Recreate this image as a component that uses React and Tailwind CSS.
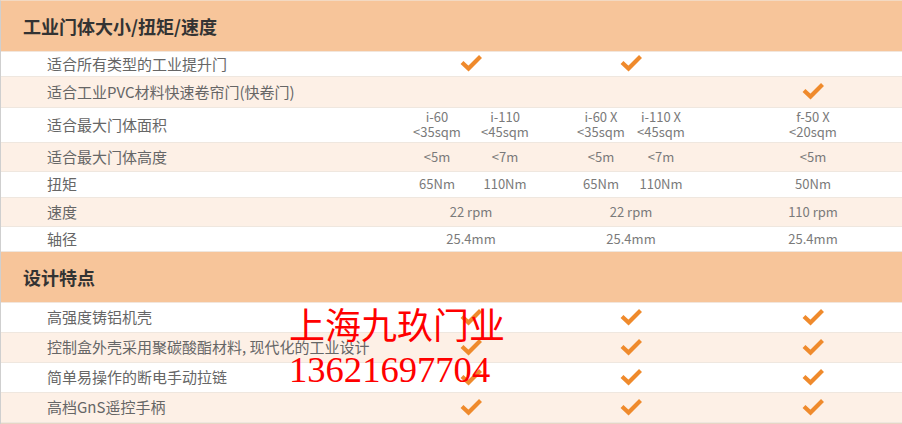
import React from 'react';

const checkColor = '#ef8a2c';

function Check() {
  return (
    <svg width="24" height="18" viewBox="0 0 24 18" className="block">
      <path d="M3 8.5 L9.5 14.5 L21.5 2.5" fill="none" stroke={checkColor} strokeWidth="4.2" strokeLinecap="butt" strokeLinejoin="miter" />
    </svg>
  );
}

function Pair({ items, w }) {
  return (
    <div className="flex justify-center">
      {items.map((t, i) => (
        <div key={i} className={`${w} text-center leading-[15px]`}>
          {t.split('\n').map((line, j) => <div key={j}>{line}</div>)}
        </div>
      ))}
    </div>
  );
}

const rows = [
  { label: '适合所有类型的工业提升门', h: 'h-[25px]', bg: 'bg-white', cells: ['check', 'check', null] },
  { label: '适合工业PVC材料快速卷帘门(快卷门)', h: 'h-[31px]', bg: 'bg-[#fdf0e6]', cells: [null, null, 'check'] },
  { label: '适合最大门体面积', h: 'h-[35px]', bg: 'bg-white', cells: [['i-60\n<35sqm', 'i-110\n<45sqm'], ['i-60 X\n<35sqm', 'i-110 X\n<45sqm'], 'f-50 X\n<20sqm'] },
  { label: '适合最大门体高度', h: 'h-[29px]', bg: 'bg-[#fdf0e6]', cells: [['<5m', '<7m'], ['<5m', '<7m'], '<5m'] },
  { label: '扭矩', h: 'h-[26px]', bg: 'bg-white', cells: [['65Nm', '110Nm'], ['65Nm', '110Nm'], '50Nm'] },
  { label: '速度', h: 'h-[29px]', bg: 'bg-[#fdf0e6]', cells: ['22 rpm', '22 rpm', '110 rpm'] },
  { label: '轴径', h: 'h-[25px]', bg: 'bg-white', cells: ['25.4mm', '25.4mm', '25.4mm'] },
];

const features = [
  { label: '高强度铸铝机壳', bg: 'bg-white' },
  { label: '控制盒外壳采用聚碳酸酯材料, 现代化的工业设计', bg: 'bg-[#fdf0e6]' },
  { label: '简单易操作的断电手动拉链', bg: 'bg-white' },
  { label: '高档GnS遥控手柄', bg: 'bg-[#fdf0e6]' },
];

function Cell({ value, col }) {
  if (value === 'check') {
    return <div className="flex justify-center"><Check /></div>;
  }
  if (Array.isArray(value)) {
    return <Pair items={value} w={col === 0 ? 'w-[75px]' : 'w-[60px]'} />;
  }
  if (!value) return <div />;
  return (
    <div className="text-center leading-[15px]">
      {value.split('\n').map((line, j) => <div key={j}>{line}</div>)}
    </div>
  );
}

function Row({ label, h, bg, cells }) {
  return (
    <div className={`grid grid-cols-[402px_136px_184px_180px] items-center border-b border-[#efe7df] ${h} ${bg}`}>
      <div className="pl-[46px] text-[15px] text-[#666] leading-none pb-[2px]">{label}</div>
      {cells.map((c, i) => (
        <div key={i} className="text-[13px] text-[#7a7a7a] pb-[2px]">
          <Cell value={c} col={i} />
        </div>
      ))}
    </div>
  );
}

function Header({ title }) {
  return (
    <div className="h-[51px] bg-[#f7c59a] flex items-center pl-[22px] border-b border-[#f2e6dc]">
      <h2 className="text-[18px] font-bold text-[#333] leading-none">{title}</h2>
    </div>
  );
}

export default function App() {
  return (
    <div className="relative w-[902px] h-[424px] bg-white overflow-hidden" style={{ fontFamily: '"Noto Sans CJK SC", "Open Sans", sans-serif' }}>
      <div className="border-l border-[#cfcfcf] border-t border-t-[#f3d9c2]">
        <Header title="工业门体大小/扭矩/速度" />
        {rows.map((r, i) => <Row key={i} {...r} />)}
        <Header title="设计特点" />
        {features.map((f, i) => (
          <Row key={i} label={f.label} h="h-[30px]" bg={f.bg} cells={['check', 'check', 'check']} />
        ))}
        <div className="h-[2px] bg-[#e8d5c4]" />
      </div>

      <div className="absolute left-[289px] top-[306px] text-[#ff0000] pointer-events-none" style={{ fontFamily: '"Liberation Serif", "Noto Sans CJK SC", serif' }}>
        <div className="text-[36px] leading-[42px] tracking-[0px]">上海九玖门业</div>
        <div className="text-[36.6px] leading-[44px]">13621697704</div>
      </div>
    </div>
  );
}
